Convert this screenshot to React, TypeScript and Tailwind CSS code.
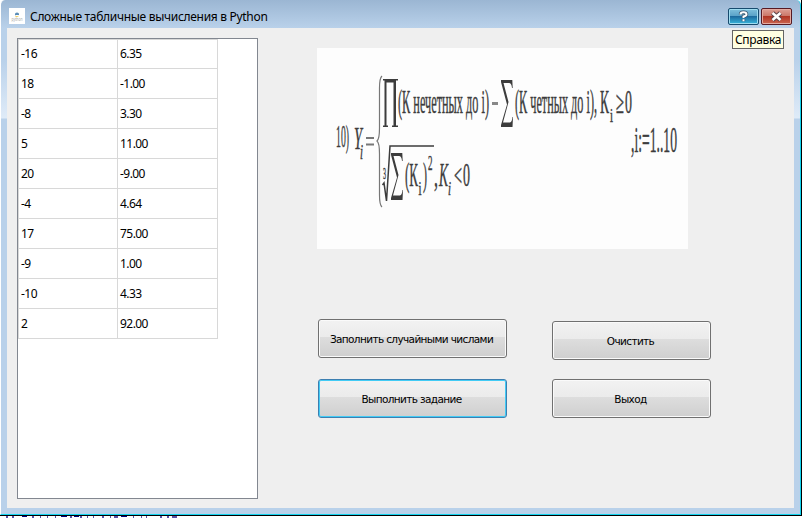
import type { ReactNode } from "react";

const rows = [
  ["-16", "6.35"], ["18", "-1.00"], ["-8", "3.30"], ["5", "11.00"], ["20", "-9.00"],
  ["-4", "4.64"], ["17", "75.00"], ["-9", "1.00"], ["-10", "4.33"], ["2", "92.00"],
];

function Btn({ children, active = false }: { children: ReactNode; active?: boolean }) {
  const tone = active
    ? "border-[#3c7fb1] shadow-[inset_0_0_0_1px_#42cbf5]"
    : "border-[#707070] shadow-[inset_0_0_0_1px_#fafafa]";
  return (
    <button className={`h-[39px] w-full rounded-[3px] border bg-[linear-gradient(#f2f2f2_0%,#ebebeb_46%,#dddddd_47%,#cfcfcf_100%)] pt-[2px] pr-[2px] font-['DejaVu_Sans',sans-serif] text-[10.5px] leading-none tracking-[-0.62px] whitespace-nowrap text-black ${tone}`}>
      {children}
    </button>
  );
}

function T({ x, y, w, s, i = false, children }: { x: number; y: number; w: number; s: number; i?: boolean; children: string }) {
  return (
    <text x={x} y={y} fontSize={s} textLength={w} lengthAdjust="spacingAndGlyphs" fontStyle={i ? "italic" : "normal"} stroke="#3c3c3c" strokeWidth="0.450">
      {children}
    </text>
  );
}

function Sum({ x, y, w, h }: { x: number; y: number; w: number; h: number }) {
  return (
    <path
      transform={`translate(${x} ${y}) scale(${w / 12} ${h / 47})`}
      d="M0 0H11.300L11.700 8H11Q10.500 3 8 3H2.500L7.500 22L2 42.500H9Q11 42 11.500 37H12L11.500 47H0V45L6 24.500L0 2Z"
    />
  );
}

function Formula() {
  return (
    <svg className="block h-[201px] w-[371px] bg-[#fdfdfd] font-['Liberation_Serif',serif]" viewBox="0 0 371 201" fill="#3c3c3c">
      <T x={19} y={99} w={13} s={32}>10)</T>
      <T x={37} y={101} w={8} s={32} i>Y</T>
      <T x={43} y={111} w={3} s={20} i>i</T>
      <path d="M49 90H57M49 96.500H57" stroke="#777" strokeWidth="2" />
      <path d="M65 28Q62.500 30 62.500 40V80Q62.500 91 60 93Q62.500 95 62.500 106V147Q62.500 157 65 159" fill="none" stroke="#777" strokeWidth="1.200" />
      <path d="M66 31H81V32.500H79V77.500H81V79H75V77.500H76.500V34.500H69.500V77.500H71V79H66V77.500H67.500V32.500H66Z" />
      <T x={81} y={65} w={91} s={34}>(К нечетных до i)</T>
      <path d="M175 55.500H181" stroke="#888" strokeWidth="3" />
      <Sum x={184} y={32} w={12} h={47} />
      <T x={198} y={65} w={82} s={34}>(К четных до i),</T>
      <T x={283} y={65} w={9} s={34}>К</T>
      <T x={293} y={74} w={3} s={18}>i</T>
      <T x={299} y={65} w={8} s={32}>≥</T>
      <T x={308} y={65} w={7} s={34}>0</T>
      <T x={314} y={104} w={46} s={36}>,i:=1..10</T>
      <T x={66} y={131} w={3} s={17}>3</T>
      <path d="M65.500 137L67 135L69.500 153L73 98H117" fill="none" stroke="#3c3c3c" strokeWidth="1.500" />
      <Sum x={74} y={105} w={12} h={47} />
      <T x={88} y={138} w={13} s={34}>(К</T>
      <T x={101.5} y={147} w={3} s={18}>i</T>
      <T x={106} y={138} w={4} s={34}>)</T>
      <T x={111} y={122} w={4.5} s={21}>2</T>
      <T x={117} y={138} w={4} s={32}>,</T>
      <T x={122} y={138} w={9} s={34} i>К</T>
      <T x={131} y={147} w={3} s={19} i>i</T>
      <T x={137} y={138} w={8} s={32}>&lt;</T>
      <T x={146} y={138} w={7} s={34}>0</T>
    </svg>
  );
}

export default function App() {
  return (
    <div className="relative h-[518px] w-[802px] overflow-hidden bg-white">
      <div className="flex h-[516px] w-[802px] flex-col border-r border-b border-black">
        <div className="flex h-[515px] flex-col rounded-t-[5px] border-r border-b border-l border-r-[#12d3ee] border-b-[#12d3ee] border-l-white bg-[linear-gradient(#9bb6d3_0px,#b9d1ea_28px,#b9d1ea_60px,#dfebf8_118px,#b9d1ea_119px,#b9d1ea_100%)] pr-[6px] pb-[6px] pl-[6px]">
          <header className="flex h-[28px] shrink-0 items-center pl-[2px]">
            <svg className="mt-[4px] h-[16px] w-[16px] bg-white" viewBox="0 0 16 16">
              <path d="M6 6Q6 4.500 8 4.500T10 6V7H7Q6 7 6 8Z" fill="#5b8db8" />
              <path d="M10 7Q10 9 8 9T6 8H9Q10 8 10 7Z" fill="#f1cf5b" />
              <text x="2.500" y="12.500" fontSize="4.500" textLength="11" lengthAdjust="spacingAndGlyphs" fill="#aaa" fontFamily="Noto Sans">python</text>
            </svg>
            <h1 className="mt-[6px] ml-[5px] font-['Noto_Sans',sans-serif] text-[12px] leading-none tracking-[-0.3px] whitespace-nowrap text-black">Сложные табличные вычисления в Python</h1>
            <div className="mt-[4px] mr-[2px] ml-auto flex gap-[2px]">
              <button className="grid h-[17px] w-[31px] place-items-center rounded-[2px] border border-[#174b6e] bg-[linear-gradient(#7fc0dc_0%,#5aa2c8_46%,#1c679b_47%,#38b6dd_100%)] shadow-[inset_0_0_0_1px_#9fdcf0]">
                <svg className="h-[13px] w-[13px]" viewBox="0 0 13 13" fill="none">
                  <path d="M3.500 4.500Q3.500 2.300 6.500 2.300T9.500 4.500Q9.500 5.700 6.500 6.500V8M6.500 9.300V11.300" stroke="#36536b" strokeWidth="3.500" />
                  <path d="M3.500 4.500Q3.500 2.300 6.500 2.300T9.500 4.500Q9.500 5.700 6.500 6.500V8M6.500 9.300V11.300" stroke="#fff" strokeWidth="2" />
                </svg>
              </button>
              <button className="grid h-[17px] w-[31px] place-items-center rounded-[2px] border border-[#571a23] bg-[linear-gradient(#dda096_0%,#cb7768_46%,#af3322_47%,#cc6650_100%)] shadow-[inset_0_0_0_1px_#e4aaa0]">
                <svg className="h-[11px] w-[13px]" viewBox="0 0 13 11" fill="none">
                  <path d="M2.500 2L10.500 9M10.500 2L2.500 9" stroke="#59424a" strokeWidth="4.500" />
                  <path d="M2.500 2L10.500 9M10.500 2L2.500 9" stroke="#fff" strokeWidth="2.500" />
                </svg>
              </button>
            </div>
          </header>
          <main className="flex h-[480px] items-start bg-[#efefef] pl-[10px]">
            <div className="mt-[10px] h-[461px] w-[241px] border border-[#828790] bg-white">
              <table className="w-[200px] table-fixed border-separate border-spacing-0 border-t border-l border-[#d8d8d8] font-['Noto_Sans',sans-serif] text-[12px] leading-none tracking-[-0.55px] text-black">
                <tbody>
                  {rows.map(([a, b], n) => (
                    <tr key={n} className="h-[30px] first:h-[29px]">
                      <td className="w-[99px] border-r border-b border-[#d8d8d8] p-0 pl-[2px]">{a}</td>
                      <td className="border-r border-b border-[#d8d8d8] p-0 pl-[2px]">{b}</td>
                    </tr>
                  ))}
                </tbody>
              </table>
            </div>
            <section className="mt-[20px] ml-[59px] w-[394px]">
              <Formula />
              <div className="mt-[70px] ml-px flex justify-between">
                <div className="flex w-[189px] flex-col gap-[21px]">
                  <Btn>Заполнить случайными числами</Btn>
                  <Btn active>Выполнить задание</Btn>
                </div>
                <div className="mt-[2px] flex w-[159px] flex-col gap-[19px]">
                  <Btn>Очистить</Btn>
                  <Btn>Выход</Btn>
                </div>
              </div>
            </section>
          </main>
        </div>
      </div>
      <svg className="block h-[2px] w-[190px]" viewBox="0 0 190 2" fill="none">
        <path d="M6 1H8M12 1H14M32 1H34M40 1H41M47 1H48M55 1H56M70 1H72M80 1H82M87 1H88M93 1H94M102 1H104M110 1H111M114 1H118M133 1H134M141 1H142M146 1H147M160 1H162M167 1H169M172 1H177" stroke="#5a50a8" strokeWidth="2" />
        <path d="M22 .5H27M61 .5H67M74 .5H79M121 .5H127" stroke="#000080" strokeWidth="1" />
      </svg>
      <div className="absolute top-[30px] left-[732px] grid h-[19px] w-[52px] place-items-center border border-[#646464] bg-[#ffffe1] font-['Noto_Sans',sans-serif] text-[12px] leading-none tracking-[-0.35px] text-black">Справка</div>
    </div>
  );
}
